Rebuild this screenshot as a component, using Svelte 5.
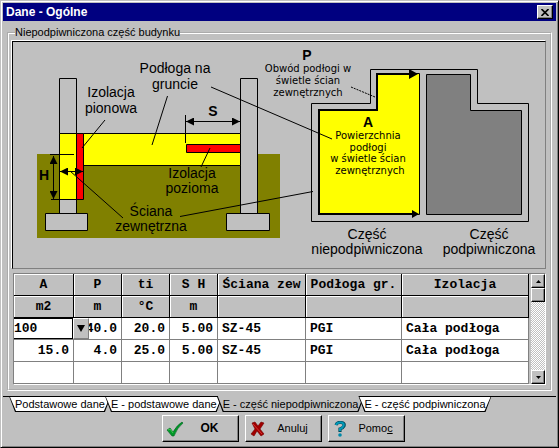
<script lang="ts">
  const columns = [
    { title: 'A', unit: 'm2' },
    { title: 'P', unit: 'm' },
    { title: 'ti', unit: '°C' },
    { title: 'S H', unit: 'm' },
    { title: 'Ściana zew', unit: '' },
    { title: 'Podłoga gr.', unit: '' },
    { title: 'Izolacja', unit: '' },
  ];

  let rows = $state([
    ['100', '40.0', '20.0', '5.00', 'SZ-45', 'PGI', 'Cała podłoga'],
    ['15.0', '4.0', '25.0', '5.00', 'SZ-45', 'PGI', 'Cała podłoga'],
    ['', '', '', '', '', '', ''],
  ]);

  const tabs = [
    'Podstawowe dane',
    'E - podstawowe dane',
    'E - część niepodpiwniczona',
    'E - część podpiwniczona',
  ];

  let activeTab = $state(2);
</script>

<div class="window">
  <header class="titlebar">
    <h1>Dane - Ogólne</h1>
    <button type="button" class="close" aria-label="Zamknij">
      <svg width="8" height="7" viewBox="0 0 8 7" aria-hidden="true">
        <path d="M0.5 0 7.5 7M7.5 0 0.5 7" stroke="#000" stroke-width="1.6" />
      </svg>
    </button>
  </header>

  <fieldset class="group">
    <legend>Niepodpiwniczona część budynku</legend>

    <div class="drawing">
      <svg viewBox="13 42 532 226" role="img" aria-label="Przekrój i rzut budynku">
        <defs>
          <marker id="arrow" viewBox="0 0 8 8" refX="8" refY="4" markerWidth="8" markerHeight="8" markerUnits="userSpaceOnUse" orient="auto-start-reverse">
            <path d="M0 0 8 4 0 8Z" />
          </marker>
        </defs>

        <!-- ground, walls and footings -->
        <path d="M37 154H280V238H37Z" fill="#808000" />
        <g class="outlined">
          <path d="M59.5 213.5V78.5H76.5V213.5M240.5 213.5V78.5H257.5V213.5" fill="#c0c0c0" />
          <path d="M45.5 213.5H87.5V230.5H45.5ZM226.5 213.5H269.5V230.5H226.5Z" fill="#c0c0c0" />
          <path d="M59.5 133.5H76.5V199.5H59.5ZM83.5 133.5H240.5V165.5H83.5Z" fill="#ff0" />
          <path d="M76.5 133.5H83.5V199.5H76.5ZM186.5 144.5H240.5V152.5H186.5Z" fill="#f00" />
        </g>

        <!-- dimensions -->
        <g class="lines">
          <path d="M50 154.5H74M51 199.5H77M185.5 115V143" />
          <path d="M53.5 156V199" marker-start="url(#arrow)" marker-end="url(#arrow)" />
          <path d="M60 171.5H83" marker-start="url(#arrow)" marker-end="url(#arrow)" />
          <path d="M186 121.5H240" marker-start="url(#arrow)" marker-end="url(#arrow)" />
        </g>

        <!-- plan view -->
        <g class="outlined">
          <path d="M370.5 69.5H477.5V103.5H528.5V221.5H311.5V103.5H370.5Z" fill="#c0c0c0" />
          <path d="M377.5 73.5H419.5V214.5H318.5V109.5H377.5Z" fill="#ff0" />
          <path d="M426.5 74.5H470.5V110.5H521.5V214.5H426.5Z" fill="#808080" />
        </g>
        <path d="M410 74H377V110H319V214H414" fill="none" stroke="#000" stroke-width="2" />
        <path d="M409 69 418 74 409 79ZM412 210 419 214 412 218Z" />

        <!-- leader lines -->
        <g class="lines">
          <path d="M167.5 96 152 145M211 87 332 139M105 120 82 148M210 148 201 167" />
          <path d="M70 171 123 218M180 216.500 313 191.500" />
          <path d="M351 87 375 97" stroke-dasharray="2 1" />
        </g>

        <g class="caption">
          <text x="175" y="73">Podłoga na</text>
          <text x="175" y="89">gruncie</text>
          <text x="111" y="97">Izolacja</text>
          <text x="111" y="113">pionowa</text>
          <text x="192" y="178">Izolacja</text>
          <text x="192" y="193">pozioma</text>
          <text x="151" y="216">Ściana</text>
          <text x="151" y="231">zewnętrzna</text>
          <text x="367" y="239">Część</text>
          <text x="367" y="254">niepodpiwniczona</text>
          <text x="489" y="239">Część</text>
          <text x="489" y="254">podpiwniczona</text>
        </g>
        <g class="symbol">
          <text x="213" y="116">S</text>
          <text x="44" y="180">H</text>
          <text x="307" y="60">P</text>
          <text x="368" y="127">A</text>
        </g>
        <g class="note">
          <text x="308" y="72">Obwód podłogi w</text>
          <text x="308" y="84">świetle ścian</text>
          <text x="308" y="96">zewnętrznych</text>
          <text x="368" y="139">Powierzchnia</text>
          <text x="368" y="151">podłogi</text>
          <text x="368" y="162">w świetle ścian</text>
          <text x="370" y="174">zewnętrznych</text>
        </g>
      </svg>
    </div>

    <div class="grid">
      <table>
        <colgroup>
          <col class="w-a" />
          <col class="w-num" />
          <col class="w-num" />
          <col class="w-num" />
          <col class="w-wall" />
          <col class="w-floor" />
          <col />
        </colgroup>
        <thead>
          <tr>
            {#each columns as column}
              <th scope="col">{column.title}</th>
            {/each}
          </tr>
          <tr>
            {#each columns as column}
              <th>{column.unit}</th>
            {/each}
          </tr>
        </thead>
        <tbody>
          {#each rows as row, r}
            <tr>
              {#each row as cell, c}
                {#if r === 0 && c === 0}
                  <td class="editing">
                    <input type="text" aria-label="A" bind:value={rows[0][0]} />
                    <button type="button" aria-label="Rozwiń listę">
                      <svg width="8" height="7" viewBox="0 0 8 7" aria-hidden="true"><path d="M0 0H8L4 7Z" /></svg>
                    </button>
                  </td>
                {:else}
                  <td class:num={c < 4}>{cell}</td>
                {/if}
              {/each}
            </tr>
          {/each}
        </tbody>
      </table>
      <div class="scrollbar">
        <button type="button" aria-label="W górę">
          <svg width="5" height="3" viewBox="0 0 5 3" aria-hidden="true"><path d="M0 3H5L2.5 0Z" /></svg>
        </button>
        <div class="thumb"></div>
        <button type="button" class="down" aria-label="W dół">
          <svg width="5" height="3" viewBox="0 0 5 3" aria-hidden="true"><path d="M0 0H5L2.500 3Z" /></svg>
        </button>
      </div>
    </div>
  </fieldset>

  <div class="tabs" role="tablist">
    {#each tabs as tab, i}
      <button
        type="button"
        role="tab"
        class="tab"
        class:active={i === activeTab}
        aria-selected={i === activeTab}
        onclick={() => (activeTab = i)}
      >
        <span>{tab}</span>
      </button>
    {/each}
    <div class="rest"></div>
  </div>

  <footer class="actions">
    <button type="button" class="ok">
      <svg width="18" height="16" viewBox="0 0 18 16" aria-hidden="true">
        <path d="M1 9 4 7 7 11Q11 4 16 1L17 2Q11 7 8 15H6Z" fill="#009828" stroke="#006020" stroke-width="0.6" />
        <path d="M2 9 4 8 7 12" fill="none" stroke="#40c850" />
      </svg>
      <span>OK</span>
    </button>
    <button type="button">
      <svg width="18" height="16" viewBox="0 0 18 16" aria-hidden="true">
        <path d="M3 2 6 1 9 5 12 1 15 2 11 8 15 13 12 15 8 10 5 15 2 13 6 8Z" fill="#a00000" stroke="#700000" stroke-width="0.6" />
        <path d="M4 3 13 13" stroke="#d83030" />
      </svg>
      <span>Anuluj</span>
    </button>
    <button type="button">
      <svg width="18" height="16" viewBox="0 0 18 16" aria-hidden="true">
        <path d="M4 4Q5 1 9 1.500 13 2 12 5 11 7 8 8V11" fill="none" stroke="#004858" stroke-width="3.200" />
        <path d="M4 4Q5 1 9 1.500 12.500 2 11.500 5 10.500 7 8 8V10" fill="none" stroke="#0098b8" stroke-width="2" />
        <circle cx="8" cy="14" r="1.800" fill="#0088a8" />
      </svg>
      <span>Pomo<u>c</u></span>
    </button>
  </footer>
</div>

<style>
  :global(body) {
    background: #c0c0c0;
  }

  .window {
    box-sizing: border-box;
    min-height: 100vh;
    padding: 1px;
    border: 1px solid #c0c0c0;
    border-right-color: #000;
    border-bottom-color: #000;
    box-shadow: inset 1px 1px #fff, inset -1px -1px #808080;
    background: #c0c0c0;
    color: #000;
    font: 11px/13px "Liberation Sans", Arial, sans-serif;
  }

  button {
    display: flex;
    align-items: center;
    justify-content: center;
    box-sizing: border-box;
    padding: 0;
    border: 1px solid;
    border-color: #fff #000 #000 #fff;
    border-radius: 0;
    box-shadow: inset -1px -1px #808080;
    background: #c0c0c0;
    color: #000;
    font: inherit;
  }

  .titlebar {
    display: flex;
    align-items: center;
    justify-content: space-between;
    height: 18px;
    margin: 1px;
    padding: 0 3px;
    background: #000080;
    color: #fff;
  }

  h1 {
    margin: 0;
    font-size: 12px;
    line-height: 18px;
  }

  .close {
    width: 16px;
    height: 14px;
  }

  .group {
    min-width: 0;
    margin: 5px 5px 0;
    padding: 2px 4px 4px 3px;
    border: 2px groove #fff;
  }

  legend {
    margin-left: 3px;
    padding: 0;
  }

  .drawing {
    border: 1px solid #808080;
    border-top-color: #000;
    border-left-color: #000;
    box-shadow: -1px -1px #fff;
  }

  .drawing svg {
    display: block;
    width: 100%;
    height: auto;
  }

  .outlined {
    stroke: #000;
  }

  .lines {
    fill: none;
    stroke: #000;
  }

  text {
    text-anchor: middle;
  }

  .caption {
    font-size: 14px;
  }

  .symbol {
    font-size: 14px;
    font-weight: bold;
  }

  .note {
    font-family: "DejaVu Sans", Verdana, sans-serif;
    font-size: 10px;
  }

  .grid {
    display: flex;
    gap: 2px;
    margin: 4px 0 0 1px;
    border: 1px solid;
    border-color: #808080 #fff #fff #808080;
  }

  table {
    flex: 1;
    width: 0;
    table-layout: fixed;
    border-collapse: separate;
    border-spacing: 0;
    background: #fff;
    font: bold 13px/15px "Liberation Mono", "Courier New", monospace;
  }

  .w-a {
    width: 60px;
  }

  .w-num {
    width: 48px;
  }

  .w-wall {
    width: 88px;
  }

  .w-floor {
    width: 96px;
  }

  th,
  td {
    box-sizing: border-box;
    height: 22px;
    padding: 0 4px;
    overflow: hidden;
    border-right: 1px solid #808080;
    border-bottom: 1px solid #808080;
    white-space: nowrap;
    text-align: left;
  }

  th {
    border-color: #000;
    box-shadow: inset 1px 1px #fff;
    background: #c0c0c0;
    text-align: center;
  }

  .num {
    text-align: right;
  }

  .editing {
    position: relative;
    padding: 0;
    overflow: visible;
  }

  .editing input {
    display: block;
    box-sizing: border-box;
    width: 100%;
    height: 21px;
    padding: 0;
    border: 1px solid #000;
    border-left: 0;
    outline: 0;
    background: #fff;
    font: inherit;
  }

  .editing button {
    position: absolute;
    top: 0;
    left: 100%;
    width: 16px;
    height: 21px;
    border-color: #fff #808080 #808080 #fff;
    box-shadow: none;
  }

  .scrollbar {
    display: flex;
    flex-direction: column;
    width: 14px;
    background: repeating-conic-gradient(#fff 0 25%, #c0c0c0 0 50%) 0 0 / 2px 2px;
  }

  .scrollbar button,
  .thumb {
    height: 14px;
  }

  .thumb {
    border: 1px solid;
    border-color: #fff #000 #000 #fff;
    box-shadow: inset -1px -1px #808080;
    background: #c0c0c0;
    box-sizing: border-box;
  }

  .scrollbar .down {
    margin-top: auto;
  }

  .tabs {
    display: flex;
    margin: 5px 1px 0;
  }

  .tabs::before {
    content: "";
    width: 12px;
    border-top: 1px solid #000;
  }

  .tab {
    position: relative;
    height: 16px;
    margin-left: -6px;
    padding: 0 6px;
    border: 0;
    box-shadow: none;
    background: #000;
    clip-path: polygon(0 0, 100% 0, calc(100% - 6px) 100%, 6px 100%);
  }

  .tab::before {
    content: "";
    position: absolute;
    inset: 1px;
    background: #fff;
    clip-path: polygon(0 0, 100% 0, calc(100% - 6px) 100%, 6px 100%);
  }

  .tab.active::before {
    top: 0;
    background: #c0c0c0;
  }

  .tab span {
    position: relative;
  }

  .rest {
    flex: 1;
    margin-left: -6px;
    border-top: 1px solid #000;
  }

  .actions {
    display: flex;
    justify-content: center;
    gap: 6px;
    padding: 3px 0 2px 8px;
  }

  .actions button {
    width: 77px;
    height: 27px;
    padding: 0 3px;
  }

  .actions span {
    flex: 1;
    text-align: center;
  }

  .ok {
    font-size: 12px;
    font-weight: bold;
  }
</style>
